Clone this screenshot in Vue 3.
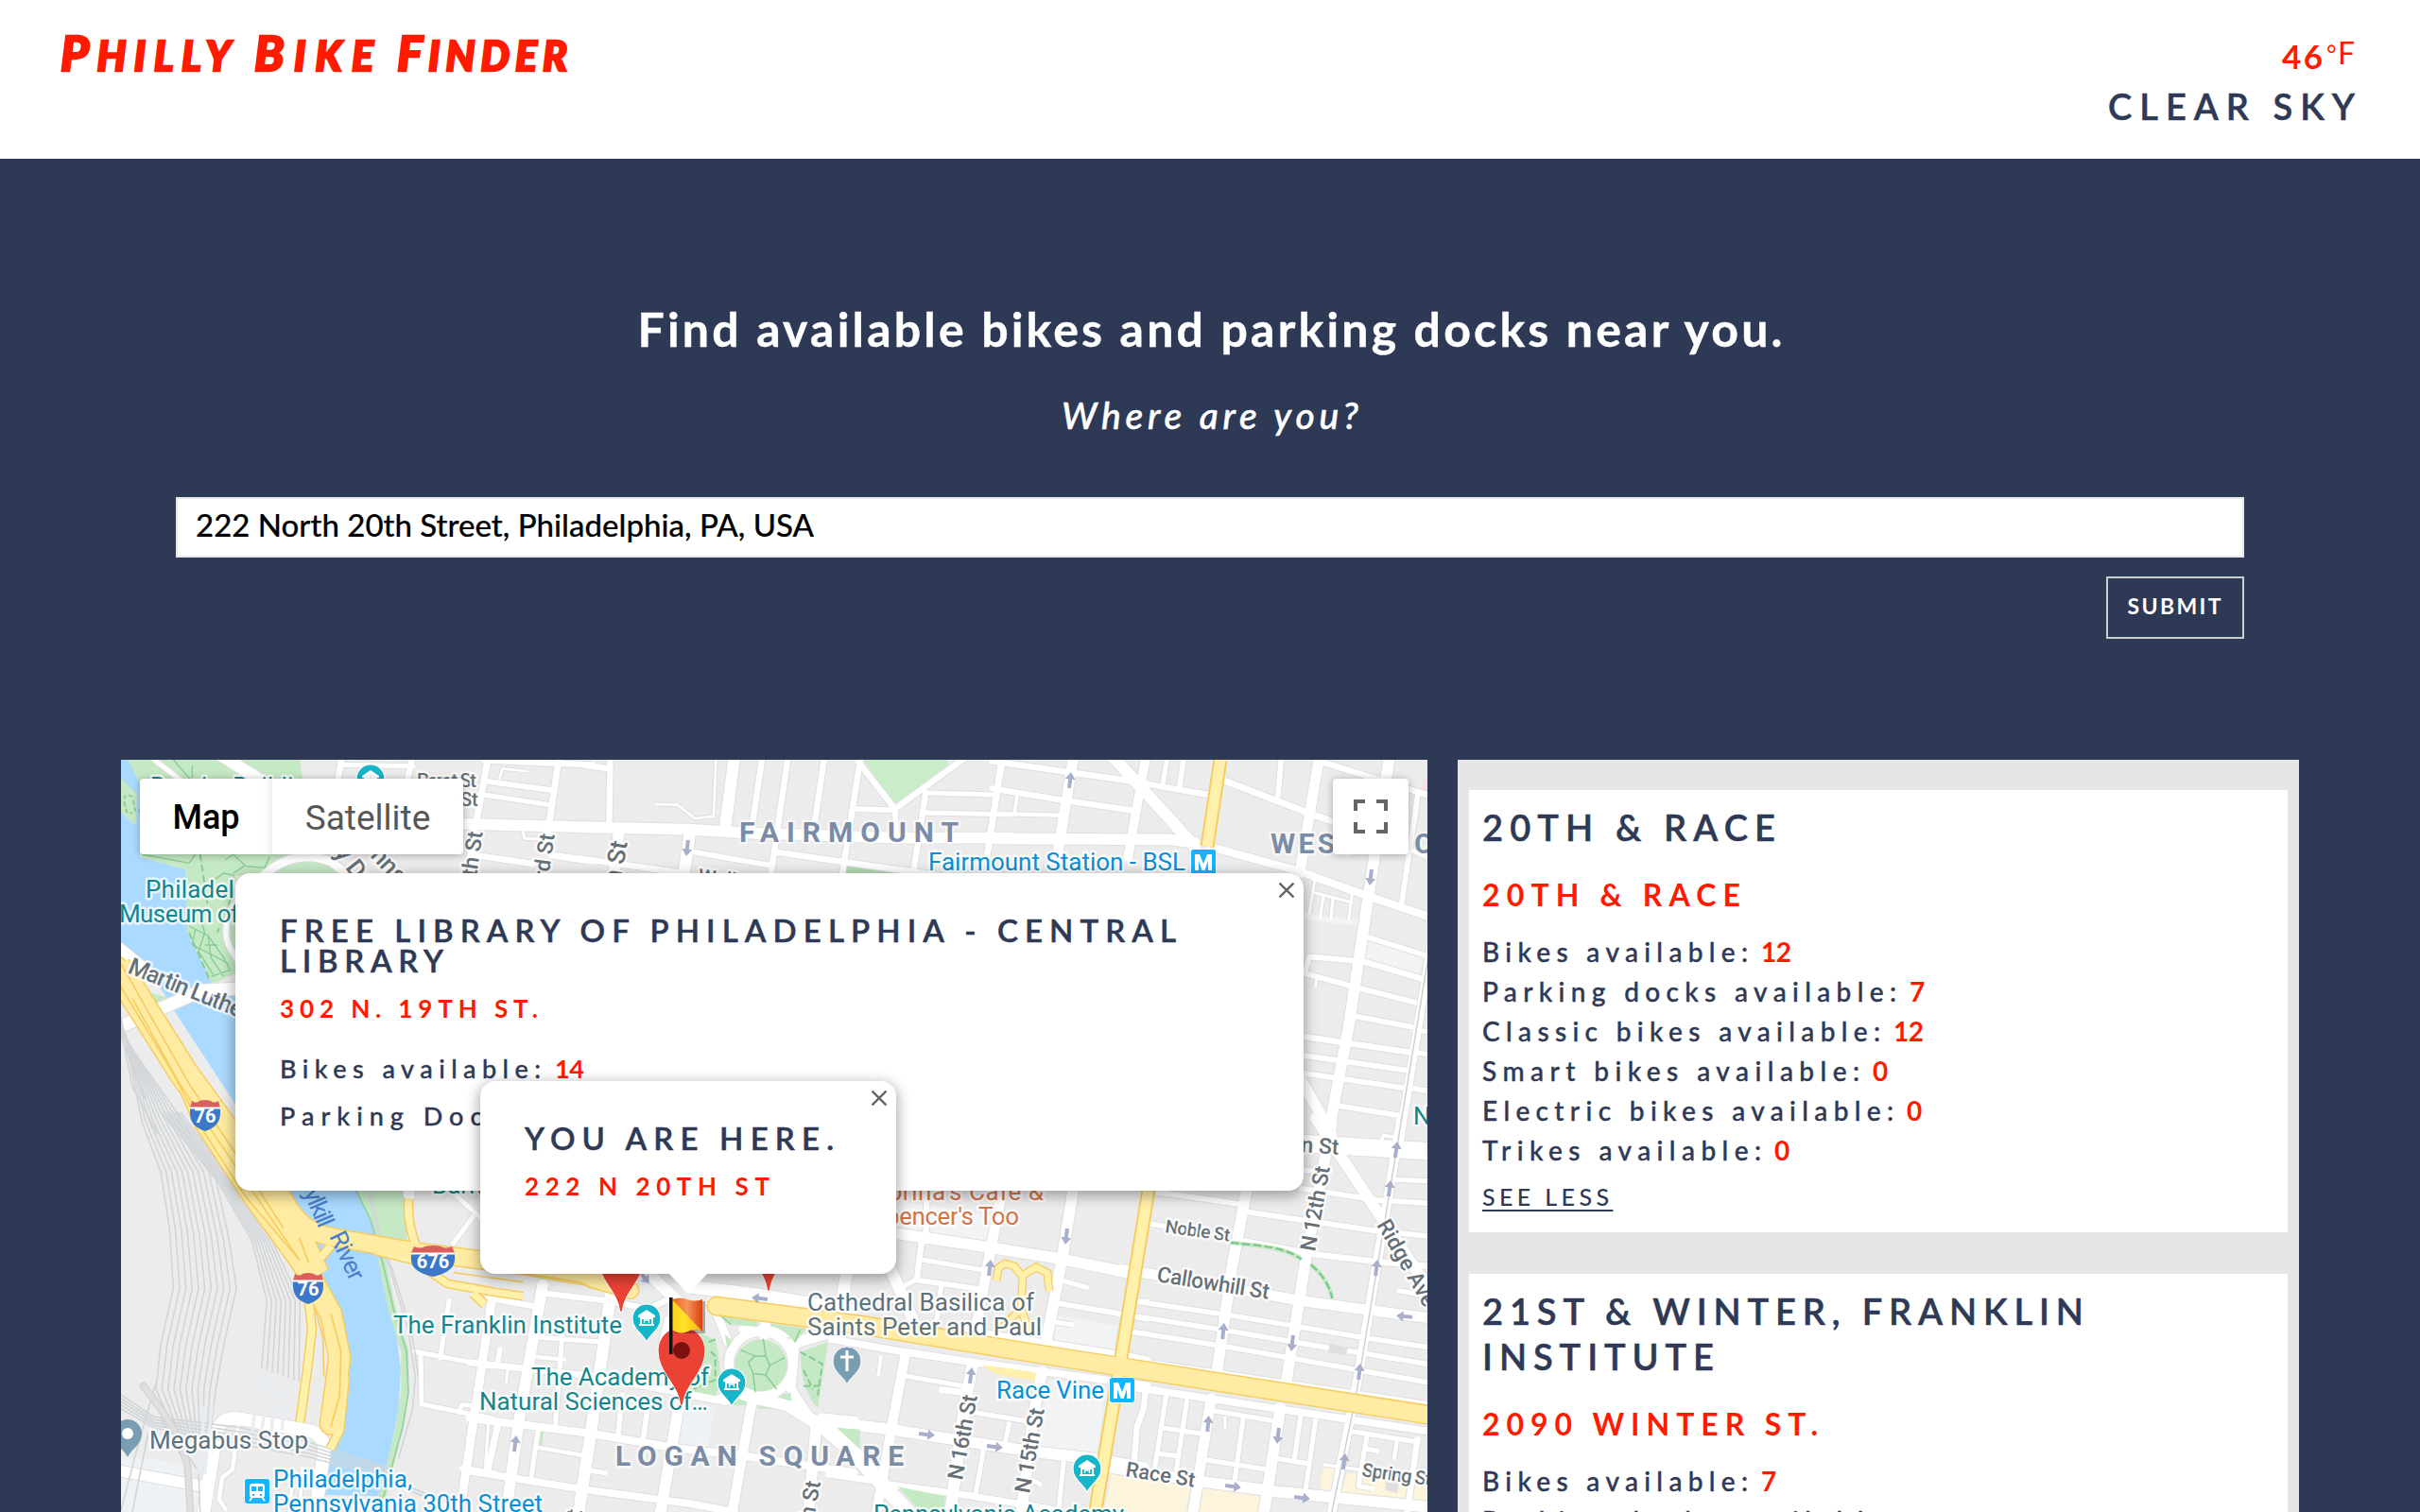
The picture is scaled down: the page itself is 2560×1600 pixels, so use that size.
<script setup>
// Stretches or tightens tracking so that a run of text fills a given width.
const vFit = {
  mounted(el, { value }) {
    if (!value) return
    el.style.letterSpacing = '0px'
    const natural = el.getBoundingClientRect().width
    const gap = (value - natural) / (el.textContent.length - 1)
    el.style.letterSpacing = gap + 'px'
    el.style.marginRight = -gap + 'px'
  },
}

const brand = [
  { text: 'Philly', width: 180 },
  { text: 'Bike', width: 126 },
  { text: 'Finder', width: 180 },
]

const stations = [
  {
    name: [{ text: '20TH & RACE', width: 310 }],
    address: { text: '20TH & RACE', width: 273 },
    counts: [
      { label: 'Bikes available:', width: 281, value: '12', vw: 32 },
      { label: 'Parking docks available:', width: 438, value: '7', vw: 0 },
      { label: 'Classic bikes available:', width: 421, value: '12', vw: 32 },
      { label: 'Smart bikes available:', width: 399, value: '0', vw: 0 },
      { label: 'Electric bikes available:', width: 435, value: '0', vw: 0 },
      { label: 'Trikes available:', width: 295, value: '0', vw: 0 },
    ],
  },
  {
    name: [
      { text: '21ST & WINTER, FRANKLIN', width: 636 },
      { text: 'INSTITUTE', width: 245 },
    ],
    address: { text: '2090 WINTER ST.', width: 355 },
    counts: [
      { label: 'Bikes available:', width: 281, value: '7', vw: 0 },
      { label: 'Parking docks available:', width: 438, value: '', vw: 0 },
    ],
  },
]

// Map tiles: origin in page pixels, geometry drawn at 3x. Roads are [width, path].
const tiles = [
  {
    x: 120, y: 800,
    roads: [
      [14, 'M130 12L230 90'], [36, 'M345 0L480 85'], [18, 'M725 0L712 80'],
      [14, 'M730 28L950 32'], [18, 'M950 0L930 90'], [20, 'M1190 0L1130 330'], [20, 'M1415 0L1370 300'],
      [16, 'M1180 80L1400 110'], [14, 'M1170 122L1385 155'], [34, 'M1080 215L1520 226'],
      [18, 'M1150 315L1330 342'], [20, 'M1390 315L1520 334'], [18, 'M1180 14L1520 28'],
      [7, 'M1225 72L1235 40L1310 48'], [8, 'M1298 235L1305 262L1360 265'],
      [26, 'M455 400C520 330 600 300 690 335L760 390'],
      [44, 'M10 610L120 700'], [38, 'M10 865L120 815L280 745L400 738'],
      [16, 'M395 450Q340 530 365 600L400 660'],
    ],
  },
  {
    x: 620, y: 800,
    roads: [
      [18, 'M0 30L75 40'], [18, 'M77 0L73 225'], [34, 'M-10 226L320 233L520 245L980 260L1350 260'],
      [36, 'M471 0L440 240'], [18, 'M560 0L525 235'], [18, 'M641 0L586 380'], [18, 'M757 0L725 215'],
      [18, 'M872 0L812 380'], [18, 'M865 20L980 168L1210 0'], [16, 'M850 168L980 172'],
      [16, 'M980 170L985 260'], [14, 'M1080 117L1300 123'], [14, 'M1075 180L1350 186'],
      [20, 'M1322 0L1272 320'], [18, 'M1078 117L1040 360'], [18, 'M-20 325L310 372'],
      [34, 'M104 240L88 380'], [36, 'M330 240L310 380'], [16, 'M330 303L590 348'],
      [18, 'M600 305L1110 378'], [7, 'M225 153L290 155L345 198L405 192L412 12'],
    ],
  },
  {
    x: 1050, y: 800,
    roads: [
      [18, 'M0 17L430 78L690 124'], [18, 'M30 0L-5 240'], [32, 'M257 0L205 320'], [28, 'M487 0L430 320'],
      [18, 'M0 103L220 140L440 172'], [12, 'M15 183L210 188'], [10, 'M78 125L70 180'],
      [34, 'M0 262L560 265L640 275'], [36, 'M380 0L640 285'], [14, 'M555 0L540 92'], [16, 'M607 0L594 98'],
      [20, 'M735 78L1000 180L1100 215'], [16, 'M917 0L905 132'], [32, 'M1037 0L975 372'],
      [18, 'M1030 14L1400 130'], [34, 'M1260 0L1130 860L1060 1230'], [24, 'M690 288L970 365L1150 430L1400 516'],
      [16, 'M1350 120L1298 470'], [14, 'M1310 290L1400 330'],
      [8, 'M1022 395L1005 500'], [8, 'M1020 433L1140 465'], [8, 'M1142 430L1130 520'],
      [8, 'M1050 443L1040 510'], [8, 'M1080 455L1074 515'],
      [16, 'M1190 575L1370 632'], [18, 'M1170 650L1355 705'],
      [16, 'M1145 650L1005 637L990 690L1145 732L1340 782'], [8, 'M1028 710L1025 732'], [16, 'M1145 825L1330 860'],
      [18, 'M980 890L1320 940'], [16, 'M980 950L1310 997'], [16, 'M980 1006L1300 1053'],
      [16, 'M1095 1110L1290 1141'], [26, 'M1392 600L1290 1230'], [14, 'M1360 872L1400 878'],
      [14, 'M1350 942L1400 950'], [16, 'M1330 1055L1400 1066'], [34, 'M975 1020L1075 1200'],
    ],
  },
  {
    x: 120, y: 1190,
    roads: [
      [40, 'M285 1240L325 990Q335 930 390 932L620 972Q672 984 668 1040L640 1240'], [34, 'M10 1098L290 1150'],
      [12, 'M395 960L378 1095L345 1120L335 1190L355 1220'], [14, 'M955 720L1200 768'], [14, 'M1065 560L1037 740'],
      [26, 'M1200 560L1098 1240'], [14, 'M975 730L978 888L1200 932'], [12, 'M1095 915L1105 890L1140 892'],
      [14, 'M1105 1090L1210 1106'], [14, 'M1060 200L1170 300'], [14, 'M1145 288L1080 375'], [34, 'M938 180L938 225'],
      [10, 'M570 1120L558 1230'], [10, 'M600 1090L590 1230'], [8, 'M1190 950L1180 1090'],
    ],
  },
  {
    x: 500, y: 1190,
    roads: [
      [34, 'M222 510L150 920L105 1240'], [36, 'M438 540L378 960L335 1240'], [18, 'M50 550L200 578'],
      [18, 'M222 535L430 560L560 585L620 555'], [20, 'M60 560L-10 1000'], [20, 'M-10 755L390 800L620 845L790 872'],
      [24, 'M-10 932L370 980L650 1028L850 1050L1210 1105'], [22, 'M-10 1100L350 1158L700 1205L830 1230'],
      [20, 'M82 945L45 1110'], [14, 'M285 660L262 960'], [14, 'M205 675L405 690'], [12, 'M205 738L290 746'],
      [16, 'M78 765L86 715'], [8, 'M112 770L106 820'], [16, 'M475 860L460 1000'], [16, 'M558 880L540 1010'],
      [34, 'M660 860L595 1240'], [30, 'M890 860L822 1240'], [12, 'M205 1025L360 1052'], [14, 'M208 970L185 1125'],
      [14, 'M370 1098L422 1106'], [36, 'M555 470L650 560'], [40, 'M690 515L900 540L1200 590'], [26, 'M760 560L810 690'],
      [30, 'M930 620L925 670'], [34, 'M1000 700L1150 655'], [28, 'M1022 700L1010 840L1090 960'],
      [30, 'M860 650L1010 660'], [40, 'M800 870L870 860L1000 890L1110 960L1260 1090'], [32, 'M1185 470L1165 580'],
      [36, 'M1110 935L1210 945'], [34, 'M1090 960L1065 1240'], [22, 'M700 860L780 875L820 840'], [20, 'M620 620L600 700'],
    ],
  },
  {
    x: 880, y: 1190,
    roads: [
      [34, 'M200 345L500 390L720 425L940 470'], [32, 'M542 200L505 390L455 660'], [34, 'M767 200L730 430L680 690'],
      [18, 'M285 365L270 492'], [18, 'M302 200L298 370'], [14, 'M288 430L482 462'], [16, 'M270 494L470 522'], [14, 'M272 490L225 515'],
      [36, 'M182 450L260 625'], [14, 'M347 510L333 620'], [14, 'M740 498L808 517'], [16, 'M720 568L920 602'],
      [14, 'M710 628L762 635'], [30, 'M50 470L40 540'], [30, 'M233 730L190 960L140 1240'], [36, 'M446 765L420 900L375 1240'],
      [34, 'M667 785L640 920L600 1240'], [34, 'M-10 945L190 968L400 1002L650 1040L830 1060L990 1090'],
      [10, 'M155 740L148 792'], [14, 'M232 798L430 832'], [20, 'M350 842L430 852'], [14, 'M440 912L640 945'], [14, 'M562 950L550 1010'],
      [14, 'M482 1030L455 1180'], [14, 'M735 1075L718 1240'], [20, 'M160 1140L400 1172L600 1205L720 1225'],
      [14, 'M640 1130L660 1142'], [20, 'M-10 1110L150 1133'], [46, 'M-10 955L250 1240'],
      [22, 'M0 682L230 722L450 755L900 815L1000 830'], [22, 'M430 655L900 728L1000 748'],
      [14, 'M955 660L1000 664'], [14, 'M960 610L1000 618'], [14, 'M970 560L1000 562'],
    ],
  },
  {
    x: 1190, y: 1190,
    roads: [
      [16, 'M105 215L370 253'], [34, 'M388 200L340 450L290 800'], [16, 'M390 278L800 338L970 355'], [16, 'M80 315L170 330'],
      [18, 'M350 365L600 412L800 435L970 450'], [34, 'M655 0L575 420L510 830'],
      [32, 'M-10 460L180 490L560 560L780 590L970 615'], [15, 'M40 562L330 605L760 677L970 708'],
      [15, 'M30 608L330 655L640 708'], [15, 'M712 719L970 762'], [15, 'M20 658L310 703L970 820'],
      [18, 'M0 745L970 890'], [28, 'M875 -10L740 800L655 1240'], [34, 'M605 -20L820 305L970 530'],
      [54, 'M560 60L970 85'], [16, 'M560 145L650 148'], [16, 'M560 203L800 240L970 250'], [14, 'M860 175L970 180'],
      [14, 'M870 528L970 545'], [10, 'M815 50L820 35L860 40'], [22, 'M0 830L970 975'], [32, 'M273 870L215 1240'], [34, 'M493 900L440 1240'],
      [18, 'M65 850L60 900L38 960L28 1090'], [14, 'M130 865L95 1090'], [14, 'M197 875L163 1100'], [14, 'M120 963L245 982'],
      [14, 'M108 1045L170 1053'], [14, 'M375 935L347 1140'], [14, 'M280 908L480 942'], [8, 'M318 930L317 962'], [14, 'M260 1065L450 1095'],
      [14, 'M480 1060L580 1076'], [14, 'M558 925L538 1060'], [14, 'M605 940L572 1170'],
      [34, 'M-40 1090L220 1130L480 1165L970 1215'], [14, 'M725 975L930 1008'], [14, 'M768 990L745 1120L742 1148L785 1155'],
      [18, 'M928 1000L895 1240'], [14, 'M770 1030L800 1036'], [12, 'M862 1010L855 1060'], [10, 'M635 1080L740 1095'],
    ],
  },
]

const at = (t) => `translate(${t.x} ${t.y}) scale(.33333)`

// Rail yard west of the river
const rails = [
  ...Array.from({ length: 11 }, (_, i) =>
    `M24 ${-340 + i * 5}L${90 + i * 11} ${-10 - i * 3}L${150 + i * 17} 150L${178 + i * 19} ${330 + i * 4}L${190 + i * 20} 520L${150 + i * 20} 700L${135 + i * 19} 840L${205 + i * 10} 1000`),
  ...Array.from({ length: 8 }, (_, i) =>
    `M${150 + i * 9} -40L${330 + i * 7} 180L${440 + i * 9} 370L${487 + i * 15} 560L${470 + i * 17} ${775 + i * 6}`),
  ...Array.from({ length: 5 }, (_, i) =>
    `M24 ${858 + i * 11}L130 ${928 + i * 9}L400 ${962 + i * 13}L620 ${1008 + i * 12}L880 ${1092 + i * 8}`),
  'M24 1225L80 1010L135 820', 'M60 1230L110 980', 'M24 -300L60 -120L140 30', 'M24 -280L100 -80', 'M150 930L235 1090L240 1230', 'M200 1000L270 1100L275 1230',
]

// One-way arrows: page x, y and heading (0 = up)
const arrows = [
  [727, 897, 187], [1132, 826, 7], [1450, 928, 187], [1047, 1342, 7], [1128, 1308, 187], [1027, 1456, 8],
  [980, 1518, 97], [1052, 1531, 97], [1294, 1409, 5], [1367, 1421, 187], [1456, 1342, 6], [1470, 1258, 8],
  [1477, 1217, 8], [1438, 1452, 6], [1486, 1393, 275], [1278, 1507, 5], [1352, 1519, 187], [1422, 1547, 8],
  [1304, 1573, 98], [1377, 1585, 98], [545, 1528, 8], [804, 1374, 277], [681, 1351, 140],
]

const museums = [[392, 824], [684, 1395], [774, 1463], [1150, 1554]]
</script>

<template>
  <div class="page">
    <header class="header">
      <h1 class="brand">
        <span v-for="w in brand" :key="w.text" v-fit="w.width" class="word">{{ w.text }}</span>
      </h1>
      <div class="weather">
        <div class="temp"><b v-fit="43">46</b><i>°</i><span>F</span></div>
        <div v-fit="261" class="sky fit">CLEAR SKY</div>
      </div>
    </header>

    <section class="hero">
      <h2><span v-fit="1211" class="fit">Find available bikes and parking docks near you.</span></h2>
      <p><span v-fit="314" class="fit">Where are you?</span></p>
      <form class="search" @submit.prevent>
        <div class="field"><span v-fit="654" class="fit">222 North 20th Street, Philadelphia, PA, USA</span></div>
        <button type="submit" class="submit"><span v-fit="99" class="fit">SUBMIT</span></button>
      </form>
    </section>

    <main class="main">
      <div class="map">
        <svg class="canvas" viewBox="128 804 1382 796" width="1382" height="796">
          <defs>
            <g id="museum">
              <path d="M0 25C-4 16-15 12-15 0A15 15 0 1 1 15 0C15 12 4 16 0 25Z" fill="#16b5c7" stroke="#fff" stroke-width="1.2" />
              <path d="M-9-3L0-9L9-3V-1H-9ZM-8 6H8V8H-8Z" fill="#fff" />
              <path d="M-6-1V6M6-1V6M-5.500 0H5.500" stroke="#fff" stroke-width="2" />
              <path d="M-2.500-1V5M2.500-1V5M-2.500 2H2.500" stroke="#fff" stroke-width="1.300" />
            </g>
            <g id="metro">
              <rect x="-13.500" y="-13.500" width="27" height="27" rx="3" fill="#12b5ff" stroke="#fff" />
              <path d="M-9 9V-8H-4L0 2L4-8H9V9H5V-1L1.500 9H-1.500L-5-1V9Z" fill="#fff" />
            </g>
            <g id="oneway">
              <path d="M0-9L5.500-1.500H2V8H-2V-1.500H-5.500Z" fill="#a9aecb" />
            </g>
            <g id="pin">
              <path d="M-1.300 58C-3 36-25 24-25 0A25 25 0 0 1 25 0C25 24 3 36 1.300 58Z" fill="#ea4335" stroke="#fff" stroke-width="1" />
              <circle r="9" fill="#7b1210" />
            </g>
            <g id="shield">
              <path d="M-16-8V-2C-16 9-9 14 0 17C9 14 16 9 16-2V-8Z" fill="#3b78c9" />
              <path d="M-14-15Q-9-12-6-15Q0-17 6-15Q9-12 14-15L16-8H-16Z" fill="#d9605f" />
              <path d="M-16-8.500H16V-6.500H-16Z" fill="#fff" />
            </g>
          </defs>

          <rect x="128" y="804" width="1382" height="796" fill="#ececec" />

          <!-- water and parks -->
          <g transform="translate(120 800) scale(.33333)">
            <path d="M0 0H40L100 100L85 320L230 360L235 560L315 725L400 715V1125L200 820L130 705L24 590Z" fill="#aadaff" />
            <path d="M24 70L75 120L72 222L24 180Z" fill="#c5e8c5" />
            <path d="M40 0H590L600 75L700 312L760 380H387V690L315 725L235 560L230 360L85 320V90Z" fill="#c5e8c5" />
            <path d="M85 745L190 770L120 800Z" fill="#c5e8c5" />
          </g>
          <g transform="translate(120 1190) scale(.33333)">
            <path d="M760 190H925L932 385L830 362Z" fill="#c5e8c5" />
            <path d="M520 170H760L830 350L850 430L890 600L912 780L905 900L870 1080L840 1180L650 1175L690 1030L740 850L700 640L600 440Z" fill="#aadaff" />
            <path d="M24 1050L240 1080L290 1230H24Z" fill="#eff2f4" />
            <path d="M850 425L885 590L925 720L925 850L905 970L850 1190" fill="none" stroke="#c5e8c5" stroke-width="24" />
            <path d="M765 200L815 300L850 420L890 590L930 720L936 850L918 960L855 1190" fill="none" stroke="#93d19f" stroke-width="5" />
          </g>
          <g transform="translate(620 800) scale(.33333)" fill="#c9edc9">
            <path d="M872 0H1140L1152 25L980 158Z" />
            <path d="M825 348L985 372H822Z" fill="#b4dcb4" />
          </g>
          <g transform="translate(1050 800) scale(.33333)">
            <path d="M1185 583L1366 640L1355 692L1172 642Z" fill="#f1f3f5" />
            <path d="M990 510L1160 530" stroke="#f1f3f5" stroke-width="20" />
            <path d="M1378 60L1362 105L1390 115Z" fill="#fde0dc" />
          </g>
          <g transform="translate(880 1190) scale(.33333)" fill="#f1f3f5">
            <path d="M200 240L515 290L500 375L200 330Z" />
            <path d="M700 600L905 640L895 720L690 680Z" />
            <path d="M690 810L870 835L840 1050L650 1020Z" />
            <path d="M890 1100L990 1112V1240H865Z" fill="#fdf4dc" />
          </g>
          <g transform="translate(1190 1190) scale(.33333)" fill="#fdf4dc">
            <path d="M-40 1105L210 1150L190 1240H-40ZM250 1150L440 1180L430 1240H235ZM630 1088L672 1092L655 1178L617 1168ZM705 1105L960 1150V1205L685 1178Z" />
            <path d="M830 1120L870 1128L865 1170L826 1160ZM650 695L710 708L700 732L645 724Z" fill="#dfdfdf" />
          </g>
          <path d="M722 1494L756 1488L748 1534L716 1526Z" fill="#eff2f4" />

          <!-- streets: casings below, surfaces above -->
          <g fill="none" stroke="#dfdfdf" stroke-linejoin="round">
            <g v-for="t in tiles" :key="t.x + '-' + t.y" :transform="at(t)">
              <path v-for="(r, i) in t.roads" :key="i" :d="r[1]" :stroke-width="r[0] + 7" />
            </g>
            <circle cx="805" cy="1443" r="34" stroke-width="12" />
          </g>
          <g fill="none" stroke="#fff" stroke-linejoin="round" stroke-linecap="round">
            <g v-for="t in tiles" :key="t.x + '-' + t.y" :transform="at(t)">
              <path v-for="(r, i) in t.roads" :key="i" :d="r[1]" :stroke-width="r[0] + 1" />
            </g>
            <circle cx="805" cy="1443" r="34" stroke-width="10" />
          </g>

          <!-- Logan Circle greens -->
          <g transform="translate(500 1190) scale(.33333)" fill="#c5e8c5">
            <circle cx="915" cy="765" r="83" />
            <path d="M700 660Q760 665 775 700L790 820L770 862L690 845Z" />
            <path d="M780 602L905 622V642L820 635Z" />
            <path d="M948 632L1060 648L1022 694Q1000 655 948 640Z" />
            <path d="M1040 722L1128 690L1095 900Q1040 840 1040 722ZM800 665L825 688L808 712ZM820 862L870 880V892L822 890ZM905 893L960 903L910 903ZM965 865L1010 850V878ZM215 975L225 975L220 1020H212Z" />
            <path d="M1155 962L1230 968L1228 1030ZM1350 1150L1500 1180L1490 1240H1430Z" />
            <g fill="none" stroke="#86cb93" stroke-width="4">
              <path d="M875 755L895 735L930 735L943 765L930 795L890 790ZM895 735L850 715M930 735L922 680M943 765L990 740M930 795L965 840M890 790L897 850M790 610L820 635M1040 650L1022 690" />
              <path d="M750 690L775 680M755 720L770 735L770 810L700 840M1040 722L1110 760L1095 860M1050 830L1100 830M1050 780L1080 840" stroke-dasharray="22 10" stroke-width="6" />
            </g>
          </g>

          <!-- rail lines -->
          <g transform="translate(120 1190) scale(.33333)" fill="none" stroke="#d2d6d9" stroke-width="5">
            <path v-for="(d, i) in rails" :key="i" :d="d" />
            <path d="M810 210L835 360L875 450L935 650L958 800L950 900L905 1060M820 210L845 360L885 460L945 650L968 800" stroke="#d3d5d8" />
            <path d="M95 830C150 900 200 960 235 1080L245 1240" stroke="#d2d2d2" stroke-width="24" stroke-linecap="round" />
            <path d="M95 830C150 900 200 960 235 1080L245 1240" stroke="#dfdfdf" stroke-width="17" stroke-linecap="round" />
            <path d="M290 895L270 1110M312 895L290 1110M465 780L440 980M495 790L470 980M520 800L500 980M545 850L535 970" stroke="#e8edf2" stroke-width="10" />
            <path d="M940 1150L1010 1180M945 1165L1000 1185" stroke-width="6" />
          </g>
          <path d="M1514 994L1434 1480L1408 1604" fill="none" stroke="#cdd0d2" stroke-width="1.500" />

          <!-- motorways -->
          <g transform="translate(120 1190) scale(.33333)" fill="none" stroke-linejoin="round">
            <g stroke="#f5cd62">
              <path d="M10 -500L225 -160L290 -10L440 220L600 440L690 600L718 740L690 950" stroke-width="74" stroke-linecap="round" />
              <path d="M10 -500L225 -160L400 80L560 300L640 480" stroke-width="96" />
              <path d="M460 100L560 270Q610 345 700 358L950 402L1320 450L1520 485L1640 515" stroke-width="62" />
              <path d="M830 400L950 430L1060 505L1210 532L1300 545" stroke-width="30" />
              <path d="M1520 490L1640 525" stroke-width="60" stroke-linecap="round" />
              <path d="M620 560L630 650L615 780L592 945M735 800L718 970L688 1030M635 450L690 385M938 235Q928 300 962 390M1140 535L1178 570" stroke-width="32" />
            </g>
            <g stroke="#ffeba1">
              <path d="M620 560L630 650L615 780L592 945M735 800L718 970L688 1030M635 450L690 385M938 235Q928 300 962 390M1140 535L1178 570" stroke="#fff0ab" stroke-width="23" />
              <path d="M830 400L950 430L1060 505L1210 532L1300 545" stroke="#fff0ab" stroke-width="21" />
              <path d="M10 -500L225 -160L290 -10L440 220L600 440L690 600L718 740L690 950" stroke-width="65" stroke-linecap="round" />
              <path d="M10 -500L225 -160L400 80L560 300L640 480" stroke-width="87" />
              <path d="M460 100L560 270Q610 345 700 358L950 402L1320 450L1520 485L1640 515" stroke-width="53" />
              <path d="M1520 490L1640 525" stroke-width="51" stroke-linecap="round" />
            </g>
            <g stroke="#f5cd62" stroke-width="5">
              <path d="M10 -460L185 -170L285 20L420 230L590 430M24 -510L240 -130L380 80L540 330M60 -400L210 -130L400 150L590 430M640 580L665 680L668 800M690 600L722 720L718 860L690 960M590 360L620 440" />
              <path d="M1190 455L1480 500L1520 520M1080 470L1300 500" />
            </g>
          </g>
          <g fill="none">
            <path d="M758 1382L910 1402L1100 1433L1510 1497" stroke="#f5cd62" stroke-width="21" stroke-linecap="round" />
            <path d="M1216 1253L1185 1443L1158 1604M1291 804L1277 896" stroke="#f5cd62" stroke-width="15" />
            <path d="M1216 1253L1185 1443L1158 1604M1291 804L1277 896" stroke="#fff0ab" stroke-width="11" />
            <path d="M1054 1355L1056 1342L1063 1337L1073 1340L1081 1350L1096 1341L1108 1347L1110 1366M1082 1350L1080 1385L1060 1405M1080 1385L1090 1412" stroke="#f5cd62" stroke-width="9" />
            <path d="M1054 1355L1056 1342L1063 1337L1073 1340L1081 1350L1096 1341L1108 1347L1110 1366M1082 1350L1080 1385L1060 1405M1080 1385L1090 1412" stroke="#fff0ab" stroke-width="6.500" />
            <path d="M758 1382L910 1402L1100 1433L1510 1497" stroke="#ffeba1" stroke-width="18" stroke-linecap="round" />
          </g>
          <path d="M1037 1444L1095 1452V1461L1054 1454Z" fill="#fff0ab" />

          <!-- park trails -->
          <g transform="translate(120 800) scale(.33333)" fill="none" stroke="#86cb93" stroke-width="4">
            <path d="M180 0L275 110M250 70V30M90 312L240 340L260 312M355 330L380 312L420 350L480 355L495 320M380 372L415 350M310 400L350 372L385 380M240 540L300 570L350 640L370 680L310 700M260 550L250 600L330 640L365 660M270 500L290 560L270 620L320 700M300 570L310 640L350 700M290 600L330 600" />
            <path d="M275 312L300 480M240 560L305 710M385 420L330 560" stroke-dasharray="22 12" stroke-width="6" />
            <path d="M60 130Q30 110 35 150Q40 190 60 180M62 140L70 175L85 175" stroke-dasharray="14 8" stroke-width="5" />
          </g>
          <g transform="translate(1190 1190) scale(.33333)" fill="none">
            <path d="M335 375C440 385 510 390 560 428M590 445Q645 490 658 552" stroke="#c5e8c5" stroke-width="14" />
            <path d="M335 375C440 385 510 390 560 428M590 445Q645 490 658 552" stroke="#72c583" stroke-width="6" stroke-dasharray="26 10" />
          </g>

          <use v-for="(a, i) in arrows" :key="i" href="#oneway" :transform="`translate(${a[0]} ${a[1]}) rotate(${a[2]})`" />

          <!-- labels -->
          <g class="lbl street">
            <text x="441" y="833" font-size="20" textLength="63">Perot St</text>
            <text x="487" y="853" font-size="20">St</text>
            <text transform="translate(353 903) rotate(52)" font-size="26">y Dr</text>
            <text transform="translate(391 906) rotate(47)" font-size="26">hns</text>
            <text transform="translate(504 928) rotate(-82)" font-size="23">th St</text>
            <text transform="translate(580 931) rotate(-82)" font-size="23">rd St</text>
            <text transform="translate(656 936) rotate(-80)" font-size="26">h St</text>
            <text transform="translate(738 934) rotate(7)" font-size="21">Wallace</text>
            <text transform="translate(134 1029) rotate(22)" font-size="25" textLength="136">Martin Luther</text>
            <text transform="translate(1232 1304) rotate(8)" font-size="19" textLength="69">Noble St</text>
            <text transform="translate(1223 1356) rotate(9)" font-size="23" textLength="120">Callowhill St</text>
            <text transform="translate(1376 1219) rotate(4)" font-size="23">n St</text>
            <text transform="translate(1391 1325) rotate(-80)" font-size="23" textLength="91">N 12th St</text>
            <text transform="translate(1456 1296) rotate(60)" font-size="23" textLength="102">Ridge Ave</text>
            <text transform="translate(1018 1567) rotate(-80)" font-size="23" textLength="91">N 16th St</text>
            <text transform="translate(1089 1581) rotate(-80)" font-size="23" textLength="91">N 15th St</text>
            <text transform="translate(1190 1562) rotate(9)" font-size="22" textLength="74">Race St</text>
            <text transform="translate(1440 1562) rotate(8)" font-size="20" textLength="74">Spring St</text>
            <text transform="translate(861 1608) rotate(-80)" font-size="23">h St</text>
            <text transform="translate(612 1620) rotate(-80)" font-size="23">St</text>
          </g>
          <g class="lbl river">
            <text transform="translate(321 1262) rotate(67)" font-size="26" textLength="42">ylkill</text>
            <text transform="translate(348 1308) rotate(65)" font-size="26" textLength="54">River</text>
          </g>
          <g class="lbl teal">
            <text x="159" y="841" font-size="25" textLength="180">Brooks Building</text>
            <text x="154" y="950" font-size="26" textLength="144">Philadelphia</text>
            <text x="126" y="976" font-size="26" textLength="166">Museum of Art</text>
            <text x="457" y="1263" font-size="26">Barnes</text>
            <text x="416" y="1411" font-size="26" textLength="242">The Franklin Institute</text>
            <text x="562" y="1466" font-size="26" textLength="188">The Academy of</text>
            <text x="507" y="1492" font-size="26" textLength="242">Natural Sciences of…</text>
            <text x="924" y="1611" font-size="26" textLength="265">Pennsylvania Academy</text>
            <text x="1495" y="1190" font-size="26">N</text>
          </g>
          <g class="lbl grey">
            <text x="158" y="1533" font-size="26" textLength="168">Megabus Stop</text>
            <text x="854" y="1387" font-size="26" textLength="240">Cathedral Basilica of</text>
            <text x="854" y="1413" font-size="26" textLength="248">Saints Peter and Paul</text>
          </g>
          <g class="lbl orange">
            <text x="909" y="1270" font-size="26" textLength="195">Sabrina's Cafe &amp;</text>
            <text x="922" y="1296" font-size="26" textLength="156">Spencer's Too</text>
          </g>
          <g class="lbl transit">
            <text x="982" y="921" font-size="26" textLength="272">Fairmount Station - BSL</text>
            <text x="1054" y="1480" font-size="26" textLength="114">Race Vine</text>
            <text x="289" y="1574" font-size="26" textLength="147">Philadelphia,</text>
            <text x="289" y="1600" font-size="26" textLength="285">Pennsylvania 30th Street</text>
          </g>
          <g class="lbl area">
            <text x="782" y="891" font-size="30" textLength="232">FAIRMOUNT</text>
            <text x="651" y="1551" font-size="30" textLength="305">LOGAN SQUARE</text>
            <text x="1344" y="903" font-size="30" textLength="90">WEST</text>
            <text x="1496" y="903" font-size="30">C</text>
          </g>

          <!-- points of interest -->
          <use v-for="(m, i) in museums" :key="i" href="#museum" :x="m[0]" :y="m[1]" />
          <use href="#metro" x="1273" y="912" />
          <use href="#metro" x="1187" y="1471" />
          <g transform="translate(896 1440)">
            <path d="M0 25C-4 16-15 12-15 0A15 15 0 1 1 15 0C15 12 4 16 0 25Z" fill="#7a9eb1" stroke="#fff" />
            <path d="M0-11V11M-7-4H7" stroke="#fff" stroke-width="3" />
          </g>
          <g transform="translate(135 1517)">
            <path d="M0 25C-4 16-15 12-15 0A15 15 0 1 1 15 0C15 12 4 16 0 25Z" fill="#7a9eb1" />
            <circle r="6" fill="#fff" />
          </g>
          <g transform="translate(272 1578)">
            <rect x="-13.500" y="-13.500" width="27" height="27" rx="3" fill="#12b5ff" stroke="#fff" />
            <rect x="-8" y="-8" width="16" height="15" rx="3" fill="#fff" />
            <path d="M-6-5H-1V0H-6ZM1-5H6V0H1ZM-5 3H-3V5H-5ZM3 3H5V5H3Z" fill="#12b5ff" />
            <path d="M-5 6L-8 10M5 6L8 10" stroke="#fff" stroke-width="2" />
          </g>
          <g class="route">
            <use href="#shield" x="217" y="1180" />
            <text x="217" y="1188">76</text>
            <use href="#shield" x="326" y="1363" />
            <text x="326" y="1371">76</text>
            <use href="#shield" transform="translate(458 1334) scale(1.440 1)" />
            <text x="458" y="1342">676</text>
          </g>

          <!-- station pins and user flag -->
          <use href="#pin" x="657" y="1330" />
          <use href="#pin" x="813" y="1308" />
          <use href="#pin" x="721" y="1429" />
          <g transform="translate(708 1373)">
            <path d="M6 4H38V38H6Z" fill="#000" opacity=".3" />
            <path d="M3 2Q12-1 19 2T35 2V36Q27 32 19 36T3 34Z" fill="url(#flagOrange)" />
            <path d="M3 2L35 36Q27 32 19 36T3 34Z" fill="url(#flagYellow)" />
            <path d="M0 0H3.500V60H0Z" fill="#111" />
            <linearGradient id="flagOrange"><stop offset="0" stop-color="#e8641e" /><stop offset=".5" stop-color="#f6945a" /><stop offset="1" stop-color="#d8420c" /></linearGradient>
            <linearGradient id="flagYellow"><stop offset="0" stop-color="#ffd51a" /><stop offset=".4" stop-color="#ffe02a" /><stop offset="1" stop-color="#f8b60c" /></linearGradient>
          </g>
        </svg>

        <div class="maptype"><span class="on">Map</span><span class="off">Satellite</span></div>
        <div class="full">
          <svg viewBox="0 0 36 36" width="36" height="36"><path d="M0 0H12V4H4V12H0ZM24 0H36V12H32V4H24ZM0 24H4V32H12V36H0ZM32 24H36V36H24V32H32Z" fill="#666" /></svg>
        </div>

        <div class="popup library">
          <h3><span v-fit="948" class="fit">FREE LIBRARY OF PHILADELPHIA - CENTRAL</span><br /><span v-fit="173" class="fit">LIBRARY</span></h3>
          <p class="addr"><span v-fit="273" class="fit">302 N. 19TH ST.</span></p>
          <p class="info"><span v-fit="276" class="fit">Bikes available:</span><b v-fit="31" class="fit">14</b></p>
          <p class="info"><span v-fit="254" class="fit">Parking Docks</span></p>
          <svg class="close" viewBox="0 0 16 16" width="16" height="16"><path d="M.5 .5L15.500 15.500M15.500 .5L.5 15.500" stroke="#666" stroke-width="2.400" /></svg>
        </div>
        <div class="popup here">
          <h3><span v-fit="327" class="fit">YOU ARE HERE.</span></h3>
          <p class="addr"><span v-fit="259" class="fit">222 N 20TH ST</span></p>
          <svg class="close" viewBox="0 0 16 16" width="16" height="16"><path d="M.5 .5L15.500 15.500M15.500 .5L.5 15.500" stroke="#666" stroke-width="2.400" /></svg>
          <svg class="tail" viewBox="0 0 42 22" width="42" height="22"><path d="M0 0H42L21 22Z" fill="#fff" /></svg>
        </div>
      </div>

      <aside class="list">
        <article v-for="(s, i) in stations" :key="i" class="card">
          <h3><span v-for="n in s.name" :key="n.text" class="line"><span v-fit="n.width" class="fit">{{ n.text }}</span></span></h3>
          <h4><span v-fit="s.address.width" class="fit">{{ s.address.text }}</span></h4>
          <p v-for="c in s.counts" :key="c.label" class="count">
            <span v-fit="c.width" class="fit">{{ c.label }}</span><b v-fit="c.vw" class="fit">{{ c.value }}</b>
          </p>
          <a class="less"><span v-fit="134" class="fit">SEE LESS</span></a>
        </article>
      </aside>
    </main>
  </div>
</template>

<style>
body { margin: 0; background: #2e3955; overflow: hidden; }
</style>

<style scoped>
.page { width: 2560px; height: 1600px; overflow: hidden; background: #2e3955; color: #2e3955; font-family: Lato, "Open Sans", sans-serif; }
h1, h2, h3, h4, p { margin: 0; font-weight: 600; }
.fit, .word { display: inline-block; white-space: nowrap; }

.header { display: flex; justify-content: space-between; height: 168px; box-sizing: border-box; padding: 0 69px 0 64px; background: #fff; }
.brand { display: flex; gap: 25px; padding-top: 26px; font-size: 43px; line-height: 60px; font-weight: 900; font-style: italic; color: #ff1a00; }
.word { text-transform: uppercase; -webkit-text-stroke: 2.4px #ff1a00; }
.word::first-letter { font-size: 51px; }
.weather { display: flex; flex-direction: column; align-items: flex-end; padding-top: 39px; }
.temp { display: flex; align-items: flex-start; height: 40px; font-size: 35px; line-height: 40px; color: #ff1a00; }
.temp b { font-weight: 700; }
.temp i { font-style: normal; font-size: 26px; line-height: 36px; margin-left: 4px; }
.temp span { font-size: 32px; line-height: 34px; margin-left: 1px; }
.sky { margin-top: 10px; font-size: 38px; line-height: 46px; font-weight: 600; -webkit-text-stroke: .5px currentColor; }

.hero { display: flex; flex-direction: column; align-items: center; height: 636px; box-sizing: border-box; padding-top: 150px; color: #fff; }
.hero h2 { font-size: 50px; line-height: 60px; font-weight: 700; -webkit-text-stroke: .4px currentColor; }
.hero p { margin-top: 37px; font-size: 39px; line-height: 48px; font-style: italic; font-weight: 500; -webkit-text-stroke: .5px currentColor; }
.search { display: flex; flex-direction: column; align-items: flex-end; gap: 20px; width: 2188px; margin-top: 63px; }
.field { width: 100%; height: 64px; box-sizing: border-box; padding-left: 19px; border: 2px solid #e6e6e6; background: #fff; color: #000; font-size: 33px; line-height: 55px; font-weight: 500; -webkit-text-stroke: .2px currentColor; }
.submit { width: 146px; height: 66px; padding: 0 2px 4px 0; border: 2px solid #ccc; background: transparent; color: #fff; font: 700 23px/54px Lato, sans-serif; }

.main { display: grid; grid-template-columns: 1382px 890px; gap: 32px; height: 796px; padding: 0 128px; }
.map { position: relative; height: 796px; overflow: hidden; font-family: Roboto, sans-serif; }
.canvas { display: block; }
.lbl { paint-order: stroke; stroke: #fff; stroke-opacity: .75; stroke-width: 5px; stroke-linejoin: round; font-family: Roboto, sans-serif; }
.street { fill: #667078; font-weight: 500; }
.river { fill: #4a7fc9; stroke: none; }
.teal { fill: #13868d; }
.grey { fill: #5c727e; }
.orange { fill: #d2754a; }
.transit { fill: #0a8fd4; }
.area { fill: #7b8ca6; font-weight: 700; stroke-opacity: .6; }
.route text { fill: #fff; font: 700 20px Roboto, sans-serif; text-anchor: middle; }

.maptype { position: absolute; left: 20px; top: 20px; display: flex; width: 342px; height: 80px; background: #fff; border-radius: 4px; box-shadow: 0 1px 8px rgba(0, 0, 0, .3); font-size: 36px; line-height: 83px; }
.on { width: 140px; text-align: center; color: #000; font-weight: 500; box-sizing: border-box; box-shadow: inset -10px 0 10px -8px rgba(0, 0, 0, .1); }
.off { flex: 1; text-align: center; color: #565656; font-size: 37px; }
.full { position: absolute; left: 1282px; top: 20px; display: grid; place-items: center; width: 80px; height: 80px; background: #fff; border-radius: 4px; box-shadow: 0 1px 8px rgba(0, 0, 0, .3); }

.popup { position: absolute; box-sizing: border-box; background: #fff; border-radius: 16px; box-shadow: 0 4px 14px 2px rgba(0, 0, 0, .32); font-family: Lato, sans-serif; }
.library { left: 121px; top: 120px; width: 1130px; height: 336px; padding: 44px 0 0 47px; }
.here { left: 380px; top: 340px; width: 440px; height: 204px; padding: 44px 0 0 47px; }
.popup h3 { font-size: 33px; line-height: 32px; font-weight: 600; -webkit-text-stroke: .5px currentColor; }
.popup .addr { margin-top: 18px; font-size: 26px; line-height: 34px; font-weight: 700; color: #ff1a00; }
.library .addr { margin-bottom: 22px; }
.popup .info { display: flex; gap: 15px; font-size: 27px; line-height: 50px; font-weight: 500; -webkit-text-stroke: .35px currentColor; }
.info b, .count b { font-weight: 700; color: #ff1a00; -webkit-text-stroke: 0; }
.close { position: absolute; right: 10px; top: 10px; }
.tail { position: absolute; left: 199px; top: 203px; }

.list { height: 796px; box-sizing: border-box; padding: 32px 12px 0; background: #e6e6e6; overflow: hidden; }
.card { margin-bottom: 44px; padding: 15px 0 22px 14px; background: #fff; }
.card h3 { font-size: 38px; line-height: 48px; font-weight: 600; -webkit-text-stroke: .5px currentColor; }
.line { display: block; height: 48px; }
.card h4 { margin: 28px 0 19px; font-size: 32px; line-height: 40px; font-weight: 700; color: #ff1a00; }
.count { display: flex; gap: 14px; height: 42px; font-size: 28px; line-height: 42px; font-weight: 500; -webkit-text-stroke: .4px currentColor; }
.less { display: block; margin-top: 12px; font-size: 25px; line-height: 32px; font-weight: 500; }
.less .fit { text-decoration: underline; text-underline-offset: 4px; text-decoration-thickness: 2px; text-decoration-skip-ink: none; }
</style>
